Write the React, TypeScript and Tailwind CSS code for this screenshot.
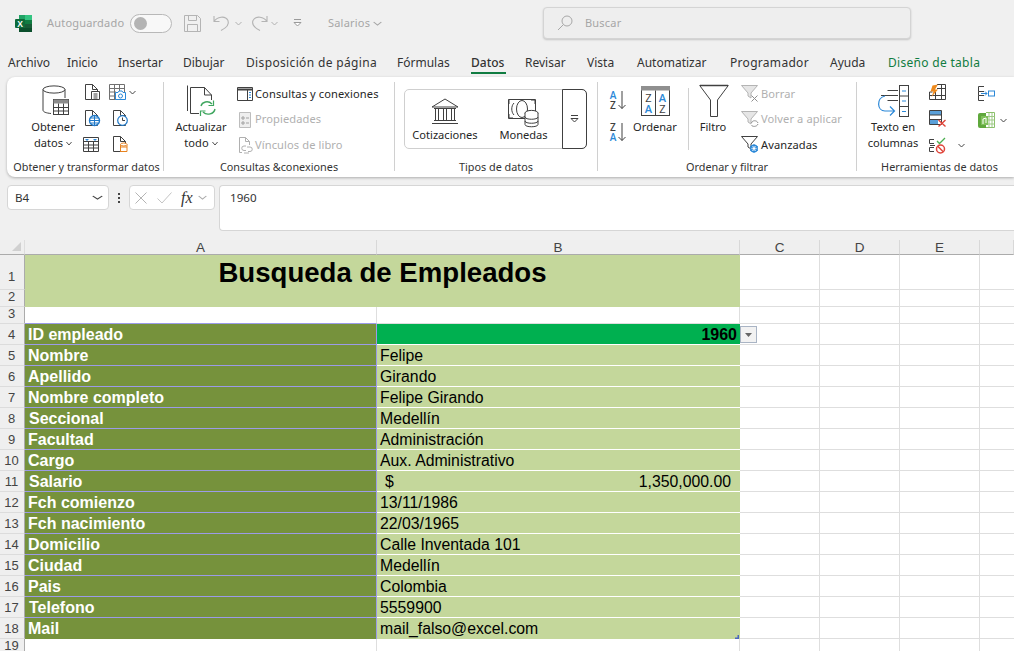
import React from "react";

const Chev = ({ c = "#444", w = 7 }: { c?: string; w?: number }) => (
  <svg width={w} height={5} viewBox="0 0 7 5" preserveAspectRatio="none" className="shrink-0"><path d="M.5 1 3.5 4 6.5 1" fill="none" stroke={c} /></svg>
);

const I = ({ w = 18, h = 18, children }: { w?: number; h?: number; children: React.ReactNode }) => (
  <svg width={w} height={h} viewBox={`0 0 ${w} ${h}`} fill="none" className="shrink-0 overflow-visible">{children}</svg>
);

const DK = "#404040";
const BL = "#2b88d8";

const Doc = ({ s = DK }: { s?: string }) => (
  <path d="M.5 15.5V.5H7.5L12.5 5.5V15.5ZM7.5.5V5.5H12.5" stroke={s} />
);

const ExcelLogo = () => (
  <I w={17} h={17}>
    <rect x="4" y="0" width="13" height="17" rx="1" fill="#107c41" />
    <rect x="10" y="0" width="7" height="5" fill="#33c481" />
    <rect x="4" y="0" width="6" height="5" fill="#21a366" />
    <rect x="10" y="9" width="7" height="4" fill="#185c37" />
    <rect x="4" y="13" width="13" height="4" fill="#0b4f2c" />
    <rect x="0" y="4" width="10" height="9" rx="1" fill="#0e6b3a" />
    <text x="5" y="11.5" fontSize="8.5" fontWeight="700" fill="#fff" textAnchor="middle" fontFamily="Liberation Sans">X</text>
  </I>
);

const SaveIcon = () => (
  <I w={17} h={17}>
    <path d="M.5.5H13.5L16.5 3.5V16.5H.5ZM4.5.5V5.5H12.5V.5M3.5 16.5V9.5H13.5V16.5" stroke="#b4b4b4" />
  </I>
);
const Undo = () => (
  <I w={17} h={16}>
    <path d="M1 6.5C4 2 12 0 15 5.5 16.5 9.5 13 13 8 15.5M1 1V6.5H6.5" stroke="#b4b4b4" strokeWidth="1.1" />
  </I>
);
const Redo = () => (
  <I w={17} h={16}>
    <path d="M16 6.5C13 2 5 0 2 5.5.5 9.5 4 13 9 15.5M16 1V6.5H10.5" stroke="#b4b4b4" strokeWidth="1.1" />
  </I>
);
const Customize = () => (
  <I w={9} h={8}><path d="M1 .5H8" stroke="#9a9a9a" /><path d="M1 3.5H8L4.5 7Z" fill="#fff" stroke="#9a9a9a" /></I>
);
const SearchIcon = () => (
  <I w={16} h={16}><circle cx="10" cy="6" r="5" stroke="#a8a8a8" /><path d="M6.4 9.6 1 15" stroke="#a8a8a8" /></I>
);

const DbIcon = () => (
  <I w={28} h={31}>
    <ellipse cx="12" cy="4.5" rx="11" ry="3.6" stroke={DK} />
    <path d="M1 4.5V25C1 27 4 28 9 28.5M23 4.5V13" stroke={DK} />
    <rect x="11.5" y="14.5" width="15" height="15" fill="#fff" stroke={DK} />
    <rect x="11.5" y="14.5" width="15" height="4" fill="#8c8c8c" />
    <path d="M11.5 22.5H26.5M11.5 26H26.5M16.5 18.5V29.5M21.5 18.5V29.5" stroke={DK} />
  </I>
);
const DocLines = () => (
  <I w={15} h={16}><Doc /><path d="M6.5 7.5H14.5V15.5H6.5Z" fill="#fff" stroke={DK} /><path d="M8.5 10H12.5M8.5 12H12.5M8.5 14H12.5" stroke={DK} /></I>
);
const TableCam = () => (
  <I w={17} h={16}>
    <path d="M.5.5H15.5V15.5H.5ZM.5 4.5H15.5M.5 8H7M.5 12H7M5.5.5V15.5M10.5.5V8" stroke="#707070" />
    <path d="M6.5 8.5H9L10 7H13L14 8.5H16.5V15.5H6.5Z" fill="#fff" stroke={BL} />
    <circle cx="11.5" cy="12" r="2" stroke={BL} />
  </I>
);
const DocGlobe = () => (
  <I w={15} h={16}>
    <Doc />
    <circle cx="9.5" cy="10.5" r="5" fill="#fff" stroke="#1e78c8" strokeWidth="1.4" />
    <path d="M4.5 10.5H14.5M9.5 5.5V15.5M6 8H13M6 13H13" stroke="#1e78c8" />
  </I>
);
const DocClock = () => (
  <I w={15} h={16}>
    <Doc />
    <circle cx="9.5" cy="10.5" r="4.8" fill="#fff" stroke="#1e78c8" strokeWidth="1.2" />
    <path d="M9.5 7.5V10.5H12" stroke={DK} />
  </I>
);
const TableBlue = () => (
  <I w={16} h={15}>
    <path d="M.5.5H15.5V14.5H.5ZM.5 4.5H15.5M.5 8H15.5M.5 11H15.5M5.5 4.5V14.5M10.5 4.5V14.5" stroke={DK} />
    <path d="M2 2H6L4 4ZM10 2H14L12 4Z" fill={BL} />
  </I>
);
const DocOrange = () => (
  <I w={15} h={16}>
    <Doc />
    <path d="M7.5 8.5V15.5H14V8.5" fill="#fff" stroke="#e8821e" />
    <ellipse cx="10.75" cy="8.5" rx="3.25" ry="1.5" fill="#fff" stroke="#e8821e" />
    <path d="M7.5 11H14" stroke="#e8821e" />
  </I>
);
const Refresh = () => (
  <I w={29} h={33}>
    <path d="M.5 26V.5" stroke={DK} />
    <path d="M3.5 28.5V2.5H17.5L24.5 10V15" stroke={DK} />
    <path d="M17.5 2.5V10H24.5" stroke={DK} />
    <path d="M3.5 28.5H12" stroke={DK} />
    <path d="M14 21C15 17 21 15 25 19M28 24C27 29 20 31 16 27" stroke="#3fa65f" strokeWidth="1.4" />
    <path d="M26.5 15.5V20.5H21.5M13.5 31V26H18.5" stroke="#3fa65f" strokeWidth="1.2" />
  </I>
);
const Panel = () => (
  <I w={16} h={14}>
    <path d="M.5.5H15.5V13.5H.5Z" stroke={DK} />
    <path d="M.5 2.5H15.5" stroke={DK} strokeWidth="2" />
    <path d="M10.5 3V13.5" stroke={DK} />
    <path d="M12 5.5H14M12 8H14M12 10.5H14" stroke={BL} />
  </I>
);
const Props = () => (
  <I w={12} h={16}>
    <path d="M.5.5H11.5V15.5H.5Z" stroke="#bdbdbd" fill="#eee" />
    <path d="M3 5H5V7H3ZM3 10H5V12H3ZM7 6H10M7 11H10" stroke="#a0a0a0" />
  </I>
);
const Links = () => (
  <I w={15} h={17}>
    <path d="M1.5 15.5V.5H7.5L11.5 4.5V8M7.5.5V4.5H11.5M1.5 15.5H4" stroke="#b0b0b0" />
    <path d="M9 10H12A2.2 2.2 0 0 1 12 14.5H10M8 9H6A2.2 2.2 0 0 0 6 13.5H8M6 16H11" stroke="#b0b0b0" />
  </I>
);
const Bank = () => (
  <I w={28} h={28}>
    <path d="M14 1 27 9H1Z" stroke={DK} />
    <path d="M3 10.5H25M3 22.5H25M1 25.5H27" stroke={DK} />
    <path d="M4.5 10.5V22.5M7.5 10.5V22.5M12.5 10.5V22.5M15.5 10.5V22.5M20.5 10.5V22.5M23.5 10.5V22.5" stroke={DK} />
  </I>
);
const Money = () => (
  <I w={31} h={30}>
    <path d="M.5 1.5H27.5V18M18 20.5H.5V1.5" stroke={DK} />
    <path d="M1 6V1.5H5M1 16V20H5M23 2H27V6" stroke={DK} />
    <ellipse cx="14" cy="11" rx="5.5" ry="8.5" stroke={DK} />
    <path d="M6 5C3 8 3 14 6 17" stroke={DK} />
    <ellipse cx="23.5" cy="15" rx="6.5" ry="2.6" fill="#fff" stroke={DK} />
    <path d="M17 15V26.5C17 29.5 30 29.5 30 26.5V15M17 19C17 22 30 22 30 19M17 23C17 26 30 26 30 23" fill="#fff" stroke={DK} />
  </I>
);
const More = () => (
  <I w={9} h={8}><path d="M1 .5H8" stroke={DK} /><path d="M1 3.5H8L4.5 7Z" fill="#fff" stroke={DK} /></I>
);
const Sort = ({ top, bot }: { top: string; bot: string }) => (
  <I w={18} h={20}>
    <text x="4" y="8.5" fontSize="10" fontWeight="600" fontFamily="Open Sans" textAnchor="middle" fill={top === "A" ? BL : DK}>{top}</text>
    <text x="4" y="18.5" fontSize="10" fontWeight="600" fontFamily="Open Sans" textAnchor="middle" fill={bot === "A" ? BL : DK}>{bot}</text>
    <path d="M13 1V18.5M9.5 15 13 18.5 16.5 15" stroke={DK} />
  </I>
);
const SortBox = () => (
  <I w={29} h={30}>
    <rect x=".5" y=".5" width="28" height="29" fill="#fff" stroke={DK} />
    <rect x="0" y="0" width="29" height="4.5" fill="#8f8f8f" />
    <path d="M14.5 4.5V29.5" stroke={DK} />
    <text x="7.5" y="16" fontSize="11" fontFamily="Open Sans" textAnchor="middle" fill={DK}>Z</text>
    <text x="7.5" y="27" fontSize="11" fontFamily="Open Sans" textAnchor="middle" fill={BL} fontWeight="600">A</text>
    <text x="21.5" y="16" fontSize="11" fontFamily="Open Sans" textAnchor="middle" fill={BL} fontWeight="600">A</text>
    <text x="21.5" y="27" fontSize="11" fontFamily="Open Sans" textAnchor="middle" fill={DK}>Z</text>
  </I>
);
const Funnel = () => (
  <I w={30} h={32}>
    <path d="M.7.5H29.3L18.5 15V31.5H11.5V15Z" fill="#fff" stroke={DK} />
    <path d="M1 .5H29" stroke={DK} strokeWidth="1.5" />
  </I>
);
const SmFunnel = ({ kind }: { kind: "x" | "r" | "a" }) => {
  const s = kind === "a" ? DK : "#b4b4b4";
  return (
    <I w={19} h={18}>
      <path d="M.5.5H16.5L10 8V13L7 11V8Z" fill={kind === "a" ? "#fff" : "#e6e6e6"} stroke={s} />
      {kind === "x" && <path d="M10.5 10.5 16.5 16.5M16.5 10.5 10.5 16.5" stroke="#8f8f8f" />}
      {kind === "r" && <path d="M10.5 12C11 9 16 9 17 12M17 13C16 16 11 16 10.5 14" stroke="#8f8f8f" />}
      {kind === "a" && (
        <>
          <circle cx="13" cy="12.5" r="3.2" fill="#fff" stroke={BL} strokeWidth="1.4" />
          <path d="M13 8V17M9 10.5 17 14.5M17 10.5 9 14.5" stroke={BL} />
          <circle cx="13" cy="12.5" r="1.2" fill="#fff" />
        </>
      )}
    </I>
  );
};
const TextCols = () => (
  <I w={33} h={34}>
    <path d="M10.5 5.5H21M4 10.5H21M10.5 15.5H21" stroke={DK} />
    <rect x="22.5" y=".5" width="9" height="31" fill="#fff" stroke={DK} />
    <path d="M22.5 11H31.5M22.5 21.5H31.5" stroke={DK} />
    <path d="M25 6H29M25 16H29M25 26.5H29" stroke={BL} />
    <path d="M8 11C-1 13 0 26 8 26H17M13 21.5 17.5 26 13 30.5" stroke={BL} strokeWidth="1.2" />
  </I>
);
const Flash = () => (
  <I w={17} h={16}>
    <path d="M3.5 8H.5V15.5H16.5V.5H8M.5 11.5H16.5M12.5.5V15.5M6.5 8V15.5M8 4.5H16.5" stroke={DK} />
    <path d="M9 .5 3.5 1.5 1.5 7.5H4.5L2.5 13 9 5.5H6Z" fill="#ee8a1d" />
  </I>
);
const RemoveDup = () => (
  <I w={18} h={17}>
    <path d="M.5.5H12.5V14.5H.5Z" fill="#fff" stroke={DK} />
    <rect x="1" y="1" width="11" height="4" fill="#5a9fd8" />
    <rect x="1" y="9" width="8" height="5" fill="#5a9fd8" />
    <path d="M.5 5H12.5M.5 9.5H12.5" stroke={DK} />
    <path d="M9.5 10 16.5 16.5M16.5 10 9.5 16.5" stroke="#e0453a" strokeWidth="1.4" />
  </I>
);
const Validate = () => (
  <I w={18} h={17}>
    <path d="M5 2.5H.5V6.5H5M5 10.5H.5V14.5H5M1 8.5H6" stroke={DK} />
    <path d="M8 4 10.5 6.5 16 1" stroke="#4caf50" strokeWidth="1.3" />
    <circle cx="11.5" cy="12" r="4" fill="#fff" stroke="#e0453a" strokeWidth="1.5" />
    <path d="M8.8 9.3 14.2 14.7" stroke="#e0453a" strokeWidth="1.5" />
  </I>
);
const Consolidate = () => (
  <I w={17} h={15}>
    <path d="M6 .5H.5V5.5H6M6 9.5H.5V14.5H6M.5 5.5V9.5" stroke={DK} />
    <path d="M3 7.5H9M7 5.5 9 7.5 7 9.5" stroke={BL} />
    <rect x="10.5" y="5" width="6" height="5" stroke={BL} />
  </I>
);
const Model = () => (
  <I w={17} h={16}>
    <rect x="0" y="1" width="10" height="15" rx="2" fill="#5fa83c" />
    <path d="M8 .5H16.5V15.5H8" fill="#fff" stroke="#8cc06c" />
    <path d="M11 1V15M14 1V15M8 4.5H16.5M8 8H16.5M8 12H16.5" stroke="#9dc985" />
    <rect x="3" y="4" width="7" height="9" fill="#7fc05a" />
    <path d="M5 12V7L8 6V11" stroke="#fff" />
  </I>
);

const ui = "font-['Noto_Sans',sans-serif]";

const Big = ({ icon, l1, l2, chev, cls }: { icon: React.ReactNode; l1: string; l2?: string; chev?: boolean; cls: string }) => (
  <div className={`flex flex-col items-center shrink-0 ${cls}`}>
    <div className="h-[34px] flex items-start justify-center">{icon}</div>
    <div className="text-[#262626] leading-[16px] whitespace-nowrap">{l1}</div>
    {l2 && (
      <div className="text-[#262626] leading-[16px] whitespace-nowrap flex items-center gap-[3px]">
        {l2}{chev && <Chev w={6} />}
      </div>
    )}
  </div>
);

const Row = ({ icon, label, off, w = 20 }: { icon: React.ReactNode; label: string; off?: boolean; w?: number }) => (
  <div className="h-[26px] flex items-center">
    <div className="flex items-center justify-center shrink-0" style={{ width: w }}>{icon}</div>
    <span className={`whitespace-nowrap ${off ? "text-[#b0b0b0]" : "text-[#262626]"}`}>{label}</span>
  </div>
);

const Group = ({ cls, label, children, lab = "" }: { cls: string; label: string; children: React.ReactNode; lab?: string }) => (
  <div className={`shrink-0 h-full flex flex-col ${cls}`}>
    <div className="flex-1 flex pt-[3px] min-h-0">{children}</div>
    <div className={`h-[18px] flex items-center justify-center text-[#333] text-[10.85px] whitespace-nowrap ${lab}`}>{label}</div>
  </div>
);
const Sep = () => <div className="w-px h-[89px] bg-[#d0d0d0] shrink-0" />;

const tabs = [
  { t: "Archivo", c: "w-[59px]" },
  { t: "Inicio", c: "w-[51px]" },
  { t: "Insertar", c: "w-[65px]" },
  { t: "Dibujar", c: "w-[63px]" },
  { t: "Disposición de página", c: "w-[151px] tracking-[0.35px]" },
  { t: "Fórmulas", c: "w-[74px]" },
  { t: "Datos", c: "w-[54px] font-medium" },
  { t: "Revisar", c: "w-[62px]" },
  { t: "Vista", c: "w-[50px]" },
  { t: "Automatizar", c: "w-[93px]" },
  { t: "Programador", c: "w-[100px] tracking-[0.3px]" },
  { t: "Ayuda", c: "w-[58px]" },
];

type R = { n: number; k: string; v: string; ind?: boolean };
const rows: R[] = [
  { n: 5, k: "Nombre", v: "Felipe" },
  { n: 6, k: "Apellido", v: "Girando" },
  { n: 7, k: "Nombre completo", v: "Felipe Girando" },
  { n: 8, k: "Seccional", v: "Medellín", ind: true },
  { n: 9, k: "Facultad", v: "Administración" },
  { n: 10, k: "Cargo", v: "Aux. Administrativo" },
  { n: 11, k: "Salario", v: "", ind: true },
  { n: 12, k: "Fch comienzo", v: "13/11/1986" },
  { n: 13, k: "Fch nacimiento", v: "22/03/1965" },
  { n: 14, k: "Domicilio", v: "Calle Inventada 101" },
  { n: 15, k: "Ciudad", v: "Medellín" },
  { n: 16, k: "Pais", v: "Colombia" },
  { n: 17, k: "Telefono", v: "5559900", ind: true },
  { n: 18, k: "Mail", v: "mail_falso@excel.com" },
];

const RowH = ({ n, extra = "" }: { n: number; extra?: string }) => (
  <div className={`bg-[#efefef] border-r border-r-[#ababab] border-b border-b-[#dcdcdc] flex items-end justify-center pr-[1px] text-[13px] leading-[15px] text-[#444] ${extra || "pb-[2px]"}`}>{n}</div>
);
const Blank = ({ extra = "" }: { extra?: string }) => <div className={`border-r border-b border-[#dedede] bg-white ${extra}`} />;
const Blanks = () => (<><Blank /><Blank /><Blank /><div className="border-b border-[#dedede] bg-white" /></>);

export default function App() {
  return (
    <div className={`w-[1014px] h-[651px] overflow-hidden bg-[#f0f0f0] flex flex-col ${ui} text-[11.1px]`}>
      {/* title bar */}
      <div className="h-[46px] shrink-0 flex items-center pl-[15px] text-[11px]">
        <ExcelLogo />
        <span className="ml-[15px] text-[#a6a6a6] tracking-[0.2px] w-[83px] whitespace-nowrap">Autoguardado</span>
        <div className="w-[42px] h-[19px] rounded-full border border-[#b8b8b8] bg-[#f8f8f8] flex items-center pl-[3px]">
          <div className="w-[13px] h-[13px] rounded-full bg-[#b4b4b4]" />
        </div>
        <div className="ml-[12px]"><SaveIcon /></div>
        <div className="ml-[12px]"><Undo /></div>
        <div className="ml-[5px]"><Chev c="#b0b0b0" /></div>
        <div className="ml-[9px]"><Redo /></div>
        <div className="ml-[3px]"><Chev c="#b0b0b0" /></div>
        <div className="ml-[15px]"><Customize /></div>
        <span className="ml-[26px] text-[#a6a6a6] tracking-[0.2px] w-[45px] whitespace-nowrap">Salarios</span>
        <Chev c="#a6a6a6" w={9} />
        <div className="ml-[161px] w-[368px] h-[32px] rounded-[4px] border border-[#d4d4d4] bg-[#eeeeee] shadow-[0_1px_2px_rgba(0,0,0,0.18)] flex items-center pl-[13px] gap-[12px]">
          <SearchIcon />
          <span className="text-[#a6a6a6] tracking-[0.2px]">Buscar</span>
        </div>
      </div>
      {/* tabs */}
      <div className="h-[31px] shrink-0 flex items-center pl-[8px] pt-[3px] text-[12px] text-[#333]">
        {tabs.map(({ t, c }) => (
          <div key={t} className={`relative whitespace-nowrap shrink-0 ${c}`}>
            {t}
            {t === "Datos" && <div className="absolute left-0 w-[35px] top-[18px] h-[2px] bg-[#107c41]" />}
          </div>
        ))}
        <div className="text-[#107c41] whitespace-nowrap tracking-[0.3px]">Diseño de tabla</div>
      </div>
      {/* ribbon */}
      <div className="ml-[7px] h-[100px] shrink-0 bg-white rounded-l-[8px] shadow-[0_1px_3px_rgba(0,0,0,0.28)] flex items-start pt-[5px] pb-[1px]">
        <Group cls="w-[156px] h-[94px]" lab="pl-[3px]" label="Obtener y transformar datos">
          <Big cls="w-[66px] ml-[13px]" icon={<div className="ml-[5px]"><DbIcon /></div>} l1="Obtener" l2="datos" chev />
          <div className="grid grid-cols-[26px_40px] grid-rows-[26px_26px_26px] -mt-[6px] items-center">
            <div className="ml-[-1px]"><DocLines /></div>
            <div className="flex items-center gap-[3px] ml-[-3px]"><TableCam /><Chev /></div>
            <div className="ml-[-1px]"><DocGlobe /></div>
            <div className="ml-[1px]"><DocClock /></div>
            <div className="ml-[-3px]"><TableBlue /></div>
            <div className="ml-[1px]"><DocOrange /></div>
          </div>
        </Group>
        <Sep />
        <Group cls="w-[230px] h-[94px]" label="Consultas &conexiones">
          <Big cls="w-[66px] ml-[4px]" icon={<Refresh />} l1="Actualizar" l2="todo" chev />
          <div className="ml-[1px] -mt-[4px] flex flex-col tracking-[0.1px]">
            <Row icon={<Panel />} label="Consultas y conexiones" />
            <Row icon={<Props />} label="Propiedades" off />
            <Row icon={<Links />} label="Vínculos de libro" off />
          </div>
        </Group>
        <Sep />
        <Group cls="w-[202px] h-[94px]" label="Tipos de datos">
          <div className="ml-[9px] mt-[4px] w-[183px] h-[60px] rounded-[5px] border border-[#cfcfcf] flex">
            <div className="w-[158px] flex">
              <div className="w-[80px] flex flex-col items-center pt-[8px]">
                <div className="h-[29px]"><Bank /></div>
                <span className="text-[#262626]">Cotizaciones</span>
              </div>
              <div className="w-[77px] flex flex-col items-center pt-[8px]">
                <div className="h-[29px]"><Money /></div>
                <span className="text-[#262626]">Monedas</span>
              </div>
            </div>
            <div className="flex-1 border border-[#404040] rounded-r-[5px] -m-px flex items-center justify-center"><More /></div>
          </div>
        </Group>
        <Sep />
        <Group cls="w-[258px] h-[94px]" label="Ordenar y filtrar">
          <div className="ml-[11px] flex flex-col gap-[12px] pt-[5px] shrink-0 w-[18px]">
            <Sort top="A" bot="Z" /><Sort top="Z" bot="A" />
          </div>
          <Big cls="w-[60px] ml-[-2px]" icon={<div className="pt-[1px]"><SortBox /></div>} l1="Ordenar" />
          <div className="w-px h-[62px] bg-[#d0d0d0] mt-[3px] ml-[3px] shrink-0" />
          <Big cls="w-[46px] ml-[1px]" icon={<div className="ml-[2px]"><Funnel /></div>} l1="Filtro" />
          <div className="ml-[4px] -mt-[4px] flex flex-col tracking-[0.1px]">
            <Row w={21} icon={<SmFunnel kind="x" />} label="Borrar" off />
            <Row w={21} icon={<SmFunnel kind="r" />} label="Volver a aplicar" off />
            <Row w={21} icon={<SmFunnel kind="a" />} label="Avanzadas" />
          </div>
        </Group>
        <Sep />
        <Group cls="flex-1 h-[94px]" lab="pl-[8px]" label="Herramientas de datos">
          <Big cls="w-[58px] ml-[7px]" icon={<TextCols />} l1="Texto en" l2="columnas" />
          <div className="ml-[7px] -mt-[6px] flex flex-col w-[49px]">
            <div className="h-[26px] flex items-center"><Flash /></div>
            <div className="h-[27px] flex items-center"><RemoveDup /></div>
            <div className="h-[26px] flex items-center gap-[11px]"><Validate /><Chev /></div>
          </div>
          <div className="-mt-[6px] flex flex-col">
            <div className="h-[28px] flex items-center"><Consolidate /></div>
            <div className="h-[26px] flex items-center gap-[5px]"><Model /><Chev /></div>
          </div>
        </Group>
      </div>
      {/* formula bar */}
      <div className="h-[46px] mt-[8px] shrink-0 flex items-start pl-[7px] text-[11.6px]">
        <div className="w-[102px] h-[25px] rounded-[4px] border border-[#d6d6d6] bg-white flex items-center justify-between pl-[7px] pr-[5px] text-[#333]">
          <span>B4</span><Chev w={11} c="#444" />
        </div>
        <div className="w-[20px] h-[25px] flex flex-col items-center justify-center gap-[2px]">
          <div className="w-[2px] h-[2px] bg-[#444]" /><div className="w-[2px] h-[2px] bg-[#444]" /><div className="w-[2px] h-[2px] bg-[#444]" />
        </div>
        <div className="w-[86px] h-[25px] rounded-[4px] border border-[#d6d6d6] bg-white flex items-center pl-[5px]">
          <I w={12} h={12}><path d="M.5.5 11.5 11.5M11.5.5.5 11.5" stroke="#b4b4b4" /></I>
          <div className="ml-[10px]"><I w={15} h={12}><path d="M.5 6.5 5 11 14.5.5" stroke="#c4c4c4" /></I></div>
          <span className="ml-[9px] w-[15px] font-['Liberation_Serif',serif] italic text-[16px] text-[#333] leading-none">fx</span>
          <div className="ml-[2px]"><Chev w={9} c="#aaa" /></div>
        </div>
        <div className="ml-[4px] flex-1 h-[46px] rounded-l-[4px] border border-r-0 border-[#d6d6d6] bg-white pl-[10px] pt-[4px] text-[#333] leading-[16px]">1960</div>
      </div>
      {/* sheet */}
      <div className="mt-[9px] flex-1 min-h-0 overflow-hidden font-['Liberation_Sans',sans-serif] text-[15.8px] leading-[18px] text-black">
        <div className="grid grid-cols-[25px_352px_363px_80px_80px_80px_34px] grid-rows-[15px_35px_17px_17px_21px_repeat(14,21px)_12px]">
          {/* header */}
          <div className="bg-[#efefef] border-r border-r-[#ddd] border-b border-b-[#ababab] flex items-start justify-end pr-[3px] pt-[2px]">
            <svg width="9" height="9" viewBox="0 0 9 9"><path d="M9 0V9H0Z" fill="#d0d0d0" /></svg>
          </div>
          {["A", "B", "C", "D", "E", ""].map((c) => (
            <div key={c} className="bg-[#efefef] border-r border-r-[#d8d8d8] border-b border-b-[#ababab] flex items-center justify-center text-[13.5px] leading-[15px] text-[#444]">{c}</div>
          ))}

          <RowH n={1} extra="pb-[5px]" />
          <div className="col-span-2 row-span-2 bg-[#c4d79b] flex justify-center pt-[4px] font-bold text-[27.6px] leading-[28px]">Busqueda de Empleados</div>
          <Blanks />
          <RowH n={2} />
          <Blanks />
          <RowH n={3} />
          <div className="bg-white border-r border-r-[#dedede] border-b border-b-[#9b9be8]" />
          <Blank />
          <Blanks />

          <RowH n={4} />
          <div className="bg-[#76923c] border-r border-b border-[#9b9be8] text-white font-bold text-[16px] flex items-center pl-[3px] pt-[1px]">ID empleado</div>
          <div className="bg-[#00b050] border-b border-white font-bold text-[16px] flex items-center justify-end pr-[3px] pt-[1px]">1960</div>
          <div className="bg-white border-r border-b border-[#dedede] flex items-start">
            <div className="mt-[2px] w-[17px] h-[17px] border border-[#a9b4c4] bg-[#f2f2f2] flex items-center justify-center">
              <svg width="7" height="4" viewBox="0 0 7 4"><path d="M0 0H7L3.5 4Z" fill="#666" /></svg>
            </div>
          </div>
          <Blank /><Blank /><div className="border-b border-[#dedede] bg-white" />

          {rows.map((r) => (
            <React.Fragment key={r.n}>
              <RowH n={r.n} />
              <div className={`bg-[#76923c] text-white font-bold text-[16px] flex items-center pt-[1px] border-r border-r-[#9b9be8] ${r.n === 18 ? "" : "border-b border-b-[#9b9be8]"} ${r.ind ? "pl-[4px]" : "pl-[3px]"}`}>{r.k}</div>
              <div className={`bg-[#c4d79b] flex items-center pt-[1px] pl-[3px] ${r.n === 18 ? "" : "border-b border-b-white"} relative`}>
                {r.n === 11 ? (
                  <div className="flex-1 flex justify-between pl-[5px] pr-[9px]"><span>$</span><span>1,350,000.00</span></div>
                ) : r.v}
                {r.n === 18 && (
                  <svg className="absolute right-[1px] bottom-0" width="4" height="4" viewBox="0 0 4 4"><path d="M4 0V4H0V2.5H2.5V0Z" fill="#4a66c0" /></svg>
                )}
              </div>
              <Blanks />
            </React.Fragment>
          ))}

          <div className="bg-[#efefef] border-r border-r-[#ababab] flex items-start justify-center pr-[1px] text-[13px] leading-[14px] text-[#444]">19</div>
          <div className="bg-white border-r border-[#dedede]" />
          <div className="bg-white border-r border-[#dedede]" />
          <div className="bg-white border-r border-[#dedede]" />
          <div className="bg-white border-r border-[#dedede]" />
          <div className="bg-white border-r border-[#dedede]" />
          <div className="bg-white" />
        </div>
      </div>
    </div>
  );
}
